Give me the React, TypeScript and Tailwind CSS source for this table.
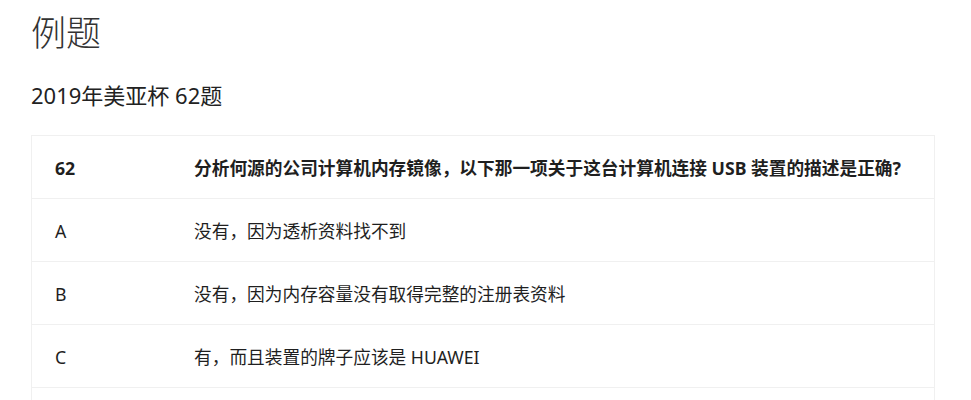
import React from 'react';

const rows = [
  { key: 'A', text: '没有，因为透析资料找不到' },
  { key: 'B', text: '没有，因为内存容量没有取得完整的注册表资料' },
  { key: 'C', text: '有，而且装置的牌子应该是 HUAWEI' },
];

const App: React.FC = () => {
  return (
    <div
      className="min-h-screen bg-white pl-[31px] pr-[36px] pt-[7px] text-[#1f1f1f]"
      style={{ fontFamily: '"Noto Sans", "Noto Sans CJK SC", sans-serif' }}
    >
      {/* Title */}
      <h1 className="text-[35px] leading-[52px] font-light text-[#333]">例题</h1>
      <h2 className="mt-[20px] text-[22px] leading-[32px] font-normal text-[#222]">2019年美亚杯 62题</h2>

      {/* Question table */}
      <div className="mt-[24px] border border-[#f0f0f0]">
        <div className="flex h-[63px] items-center border-b border-[#f0f0f0] pt-[3px] text-[17.7px] font-bold">
          <div className="w-[162px] shrink-0 pl-[23px]">62</div>
          <div>分析何源的公司计算机内存镜像，以下那一项关于这台计算机连接 USB 装置的描述是正确?</div>
        </div>
        {rows.map((r) => (
          <div key={r.key} className="flex h-[63px] items-center border-b border-[#f0f0f0] pt-[3px] text-[17.7px]">
            <div className="w-[162px] shrink-0 pl-[23px]">{r.key}</div>
            <div>{r.text}</div>
          </div>
        ))}
        <div className="h-[40px]" />
      </div>
    </div>
  );
};

export default App;
